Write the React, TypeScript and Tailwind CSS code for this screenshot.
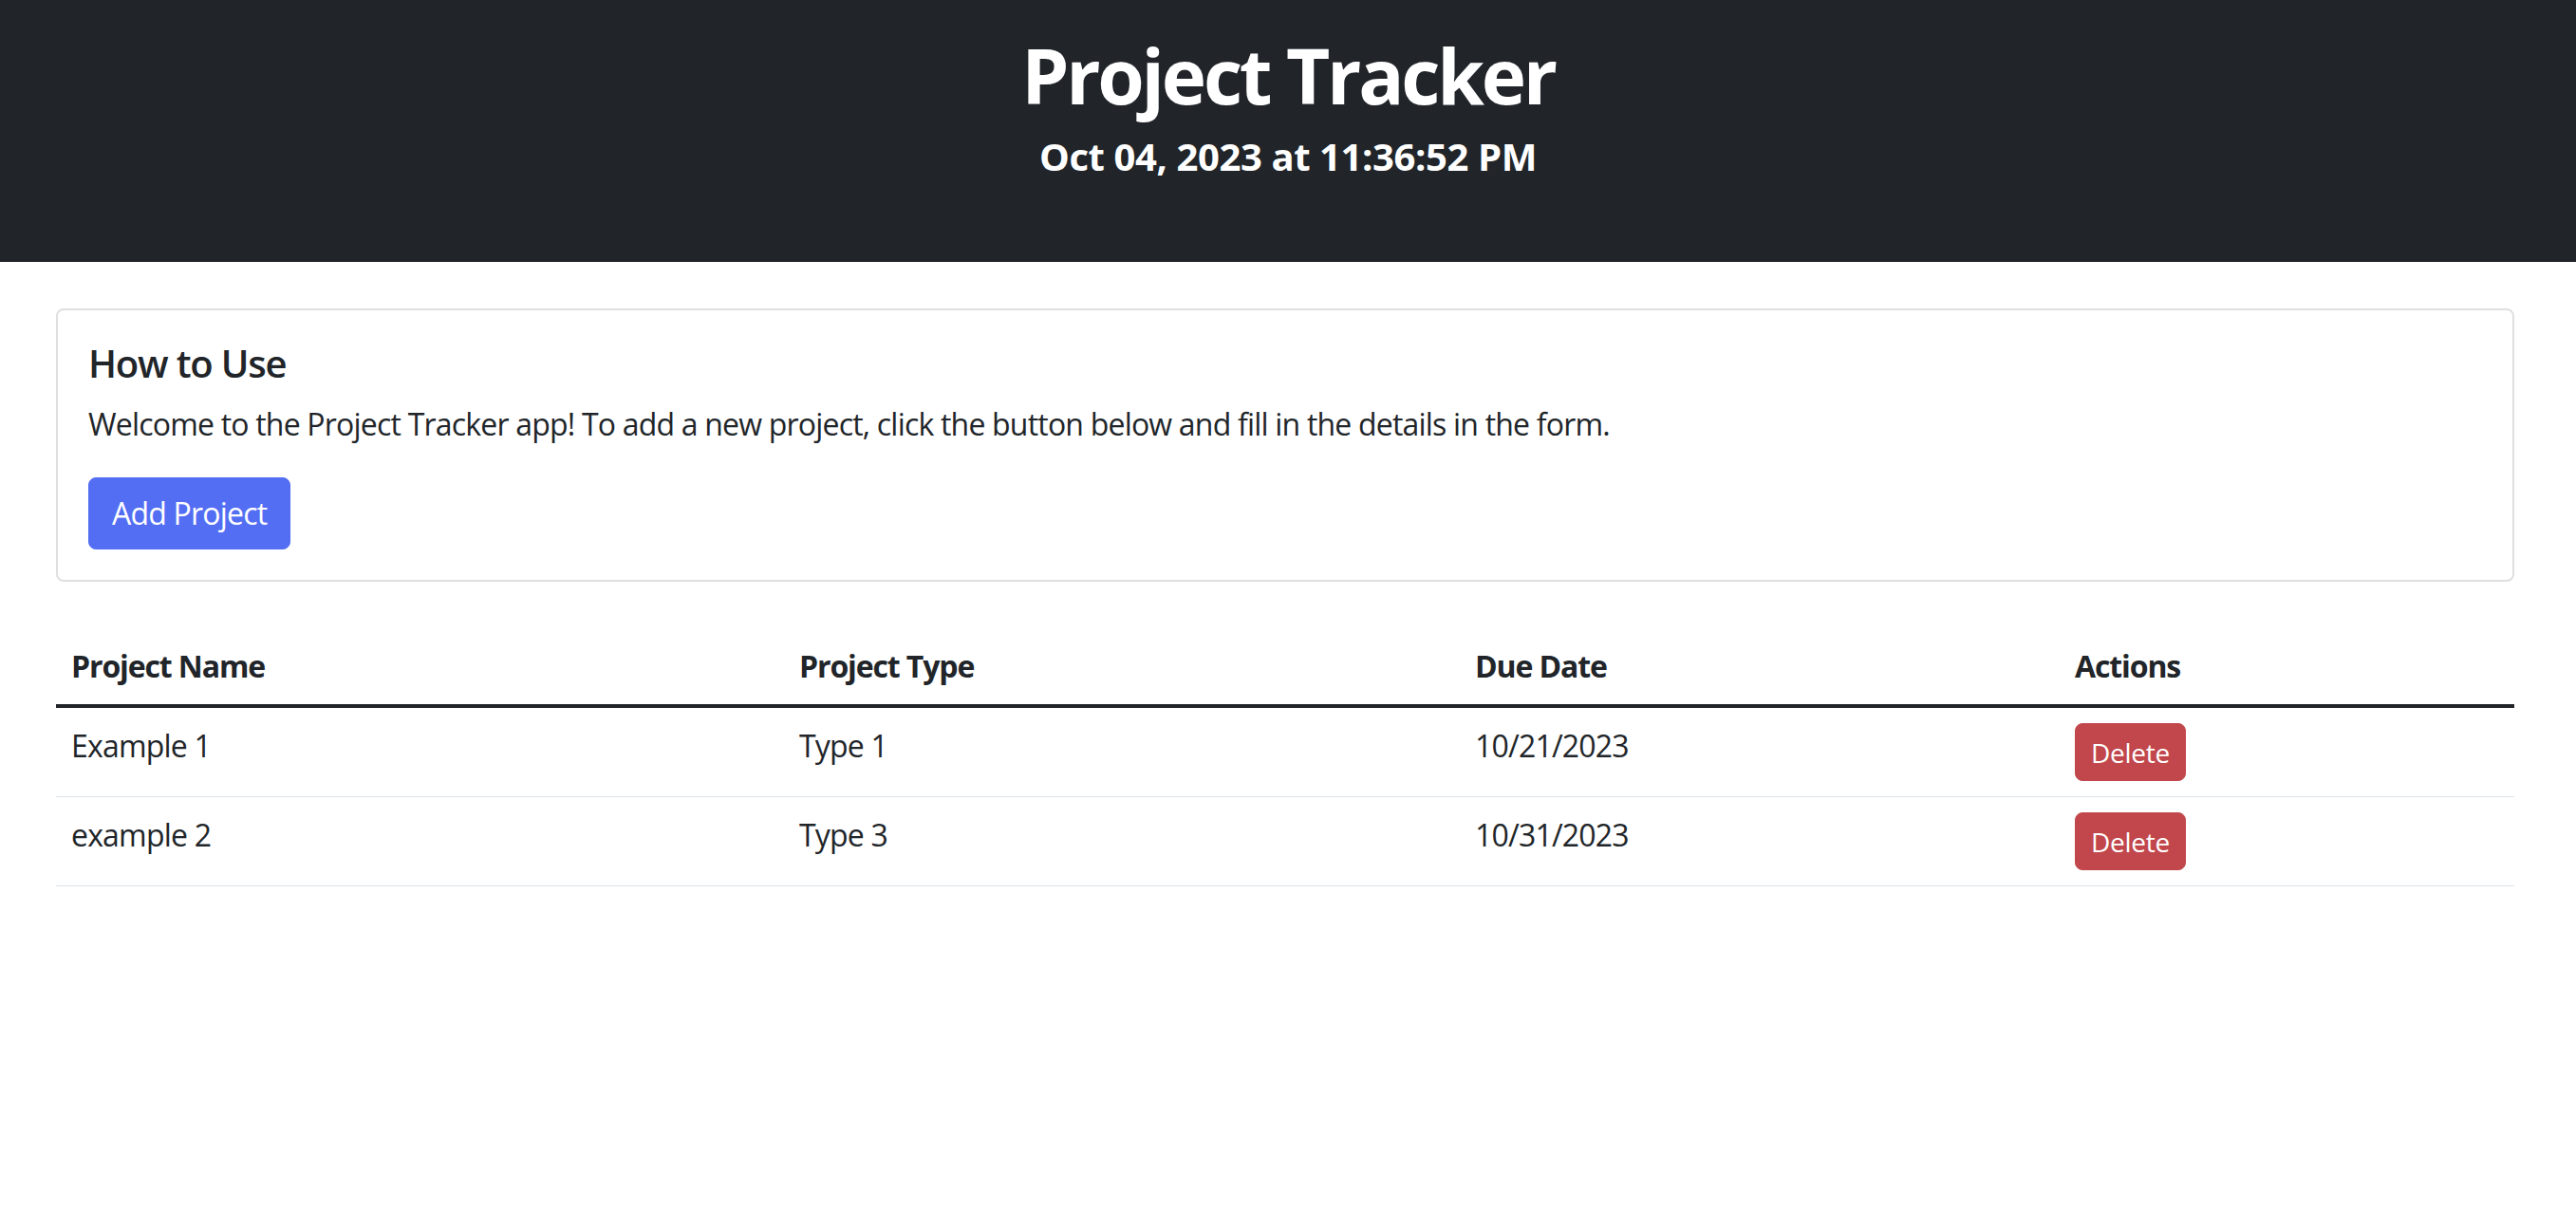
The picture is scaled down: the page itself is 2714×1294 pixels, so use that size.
type Project = {
  id: number;
  name: string;
  type: string;
  due: string;
};

const projects: Project[] = [
  { id: 1, name: "Example 1", type: "Type 1", due: "10/21/2023" },
  { id: 2, name: "example 2", type: "Type 3", due: "10/31/2023" },
];

const cols = "grid grid-cols-[767px_712px_632px_1fr]";

export default function App() {
  return (
    <div className="min-h-screen bg-white font-['Open_Sans',sans-serif] text-[#212529]">
      <header className="flex h-[276px] flex-col items-center bg-[#212529] pt-[31px] text-white">
        <h1 className="text-[80px] font-bold leading-[96px] tracking-[-0.04em]">Project Tracker</h1>
        <h4 className="mt-[14px] text-[40px] font-bold leading-[48px] tracking-[-0.01em]">
          Oct 04, 2023 at 11:36:52 PM
        </h4>
      </header>

      <main className="pl-[59px] pr-[65px] pt-[49px]">
        <div className="rounded-[8px] border-2 border-[#dfdfdf] p-[32px]">
          <h5 className="mb-[16px] text-[40px] font-semibold leading-[48px] tracking-[-0.03em]">How to Use</h5>
          <p className="mb-[32px] text-[32px] leading-[48px] tracking-[-0.025em]">
            Welcome to the Project Tracker app! To add a new project, click the button below and fill in the details in the
            form.
          </p>
          <button
            type="button"
            className="h-[76px] rounded-[8px] border border-[#536ef3] bg-[#536ef3] px-[24px] text-[32px] leading-[48px] tracking-[-0.025em] text-white"
          >
            Add Project
          </button>
        </div>

        <div className="mt-[49px]">
          <div
            className={`${cols} border-b-4 border-[#212529] text-[32px] font-bold leading-[48px] tracking-[-0.035em]`}
          >
            <div className="p-[16px]">Project Name</div>
            <div className="p-[16px]">Project Type</div>
            <div className="p-[16px]">Due Date</div>
            <div className="p-[16px]">Actions</div>
          </div>
          {projects.map((p) => (
            <div
              key={p.id}
              className={`${cols} h-[94px] border-b border-[#dee2e6] text-[32px] leading-[48px] tracking-[-0.025em]`}
            >
              <div className="px-[16px] pt-[16px]">{p.name}</div>
              <div className="px-[16px] pt-[16px]">{p.type}</div>
              <div className="px-[16px] pt-[16px]">{p.due}</div>
              <div className="px-[16px] pt-[16px]">
                <button
                  type="button"
                  className="h-[61px] rounded-[8px] border border-[#c1474c] bg-[#c1474c] px-[16px] text-[28px] leading-[42px] tracking-[-0.01em] text-white"
                >
                  Delete
                </button>
              </div>
            </div>
          ))}
        </div>
      </main>
    </div>
  );
}
